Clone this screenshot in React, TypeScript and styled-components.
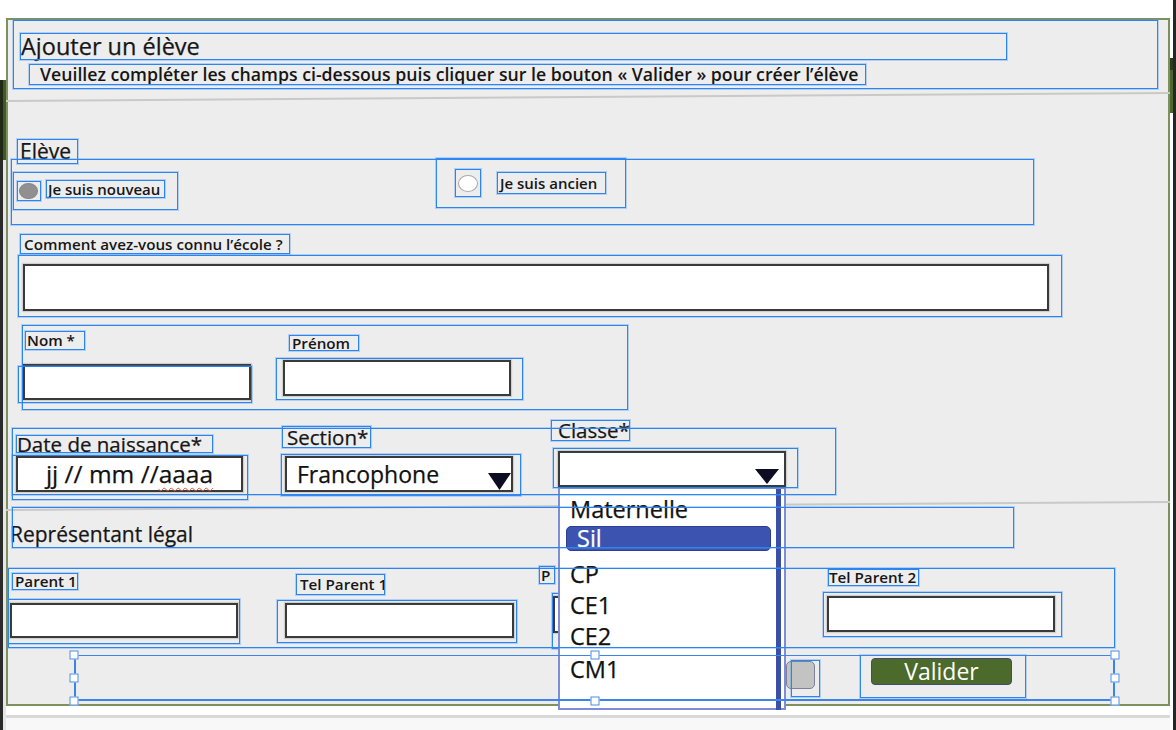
import React from "react";
import styled, { createGlobalStyle, css } from "styled-components";

const GlobalStyle = createGlobalStyle`
  *, *::before, *::after { box-sizing: border-box; }
  html, body { margin: 0; padding: 0; background: #ffffff; }
  body { font-family: "Open Sans", "Noto Sans", "DejaVu Sans", sans-serif; color: #161616; }
  #root { width: 1176px; height: 730px; }
`;

type Place = { $ml?: number; $mt?: number; $w?: number; $h?: number };

const place = css<Place>`
  flex: none;
  margin: 0;
  margin-left: ${(p) => p.$ml ?? 0}px;
  margin-top: ${(p) => p.$mt ?? 0}px;
  ${(p) => (p.$w !== undefined ? `width: ${p.$w}px;` : "")}
  ${(p) => (p.$h !== undefined ? `height: ${p.$h}px;` : "")}
`;

const frame = css`
  position: relative;
  &::after {
    content: "";
    position: absolute;
    inset: 0;
    border: 1px solid #2a85f3;
    outline: 1px solid rgba(70, 150, 245, 0.35);
    z-index: 3;
    pointer-events: none;
  }
`;

const heavier = css`
  -webkit-text-stroke: 0.25px currentColor;
`;

const Screen = styled.div`
  display: flex;
  width: 1176px;
  height: 730px;
  overflow: hidden;
  background: #ffffff;
`;

const LeftRail = styled.div`
  width: 6px;
  flex: none;
  display: flex;
  flex-direction: column;
  padding-top: 80px;
`;

const RailBand = styled.div`
  height: 80px;
  flex: none;
  background: linear-gradient(90deg, #1f2916 0 3px, #3f5a27 3px);
`;

const RailTrack = styled.div`
  flex: 1;
  background: linear-gradient(90deg, #2a2a2a 0 3px, #e6e6e6 3px);
`;

const Center = styled.div`
  width: 1164px;
  flex: none;
  display: flex;
  flex-direction: column;
`;

const TopGap = styled.div`
  height: 18px;
  flex: none;
`;

const Panel = styled.main`
  height: 688px;
  flex: none;
  border: 2px solid #7f905f;
  background: #ededed;
  display: flex;
  flex-direction: column;
  align-items: flex-start;
`;

const Footer = styled.div`
  flex: 1;
  margin-top: 9px;
  border-top: 3px solid #d9d9d9;
  background: #f8f8f8;
`;

const RightRail = styled.div`
  width: 6px;
  flex: none;
  padding-top: 58px;
  background: linear-gradient(90deg, #ffffff 0 3px, #262626 3px);
`;

const RightBand = styled.div`
  width: 3px;
  height: 55px;
  background: linear-gradient(180deg, #2c3b1e 0 12px, #4b6630 12px);
`;

const HeaderFrame = styled.header<Place>`
  ${place}
  ${frame}
  display: flex;
  flex-direction: column;
  align-items: flex-start;
`;

const Title = styled.h1<Place>`
  ${place}
  ${frame}
  ${heavier}
  padding-left: 1px;
  font-size: 23.5px;
  font-weight: 400;
  line-height: 27px;
  white-space: nowrap;
`;

const Subtitle = styled.p<Place>`
  ${place}
  ${frame}
  padding-left: 11px;
  font-size: 17.7px;
  font-weight: 600;
  line-height: 21px;
  white-space: nowrap;
`;

const Separator = styled.hr<{ $mt: number }>`
  flex: none;
  align-self: stretch;
  margin: ${(p) => p.$mt}px -2px 0;
  height: 2px;
  border: 0;
  background: #c9c9c9;
  transform: rotate(-0.4deg);
`;

const SectionTitle = styled.h2<Place>`
  ${place}
  ${frame}
  ${heavier}
  padding-left: 3px;
  font-size: 21px;
  font-weight: 400;
  line-height: 25px;
  white-space: nowrap;
`;

const RadioGroup = styled.div<Place>`
  ${place}
  ${frame}
  display: flex;
  align-items: flex-start;
`;

const RadioOption = styled.label<Place>`
  ${place}
  ${frame}
  display: flex;
  align-items: flex-start;
`;

const RadioMark = styled.span<Place>`
  ${place}
  ${frame}
  display: flex;
  align-items: flex-start;
`;

const RadioDot = styled.span<Place & { $checked?: boolean }>`
  ${place}
  display: block;
  border-radius: 50%;
  ${(p) =>
    p.$checked
      ? css`
          background: #909090;
          border: 1px solid #868686;
        `
      : css`
          background: #ffffff;
          border: 1.5px solid #a8a8a8;
        `}
`;

const OptionText = styled.span<Place & { $pl?: number }>`
  ${place}
  ${frame}
  display: block;
  padding-left: ${(p) => p.$pl ?? 2}px;
  font-size: 15px;
  font-weight: 600;
  line-height: ${(p) => p.$h ?? 20}px;
  white-space: nowrap;
`;

const FieldGroup = styled.div<Place>`
  ${place}
  ${frame}
  display: flex;
  align-items: flex-start;
`;

const Field = styled.div<Place>`
  ${place}
  display: flex;
  flex-direction: column;
  align-items: flex-start;
`;

const FieldLabel = styled.label<Place & { $pl?: number; $big?: boolean; $under?: boolean }>`
  ${place}
  ${frame}
  display: block;
  padding-left: ${(p) => p.$pl ?? 2}px;
  font-size: ${(p) => (p.$big ? 20.5 : 15.2)}px;
  font-weight: ${(p) => (p.$big ? 400 : 600)};
  line-height: ${(p) => p.$h ?? 20}px;
  white-space: nowrap;
  ${(p) => p.$big && heavier}
  ${(p) =>
    p.$under &&
    css`
      &::after {
        z-index: 1;
      }
    `}
`;

const ClippedText = styled.span<{ $w: number }>`
  display: block;
  width: ${(p) => p.$w}px;
  overflow: hidden;
`;

const InputFrame = styled.div<Place & { $under?: boolean }>`
  ${place}
  ${frame}
  display: flex;
  align-items: flex-start;
  ${(p) =>
    p.$under &&
    css`
      &::after {
        z-index: 1;
      }
    `}
`;

const TextInput = styled.input<Place>`
  ${place}
  display: block;
  padding: 0 8px;
  border: 2px solid #3a3a3a;
  background: #ffffff;
  box-shadow: 0 0 1px 1px rgba(0, 0, 0, 0.12);
  font: inherit;
  outline: none;
`;

const DateBox = styled.div<Place>`
  ${place}
  ${heavier}
  border: 2px solid #3a3a3a;
  background: #ffffff;
  box-shadow: 0 0 1px 1px rgba(0, 0, 0, 0.12);
  font-size: 24.5px;
  line-height: 32px;
  text-align: center;
  white-space: nowrap;
  color: #111111;
`;

const Misspelled = styled.span`
  text-decoration: underline wavy #e0553f;
  text-decoration-thickness: 1px;
  text-underline-offset: 4px;
`;

const SelectBox = styled.div<Place>`
  ${place}
  position: relative;
  display: flex;
  align-items: flex-end;
  border: 2px solid #3a3a3a;
  background: #ffffff;
  box-shadow: 0 0 1px 1px rgba(0, 0, 0, 0.12);
`;

const SelectValue = styled.span`
  ${heavier}
  align-self: center;
  padding-left: 10px;
  font-size: 23px;
  line-height: 32px;
  color: #111111;
  white-space: nowrap;
`;

const Arrow = styled.svg<{ $mr: number; $mb: number }>`
  flex: none;
  display: block;
  margin-left: auto;
  margin-right: ${(p) => p.$mr}px;
  margin-bottom: ${(p) => p.$mb}px;
`;

const Dropdown = styled.ul`
  position: absolute;
  top: calc(100% + 2px);
  left: -2px;
  width: 228px;
  height: 223px;
  margin: 0;
  padding: 5px 0 0;
  list-style: none;
  background: #ffffff;
  border: 2px solid #7f8dd6;
  z-index: 2;
`;

const ScrollThumb = styled.span`
  position: absolute;
  top: 0;
  bottom: -2px;
  right: 3px;
  width: 5px;
  background: #3b4fa7;
`;

const OptionItem = styled.li<{ $mt?: number; $active?: boolean }>`
  ${heavier}
  margin-top: ${(p) => p.$mt ?? 0}px;
  height: 31px;
  padding-left: 10px;
  font-size: 23.5px;
  line-height: 31px;
  color: #111111;
  white-space: nowrap;
  ${(p) =>
    p.$active &&
    css`
      margin-left: 6px;
      width: 205px;
      height: 25px;
      line-height: 23px;
      background: #3d53b0;
      border: 1px solid #2d3f91;
      border-radius: 5px;
      color: #ffffff;
    `}
`;

const LegalHeading = styled.h2<Place>`
  ${place}
  ${frame}
  ${heavier}
  padding-top: 13px;
  text-indent: -2px;
  font-size: 21px;
  font-weight: 400;
  line-height: 28px;
  white-space: nowrap;
`;

const ActionBar = styled.div<Place>`
  ${place}
  position: relative;
  display: flex;
  align-items: flex-start;
  &::after {
    content: "";
    position: absolute;
    inset: 0;
    border: solid #3d84ea;
    border-width: 1px 2px 2px 2px;
    z-index: 3;
    pointer-events: none;
  }
`;

const Handle = styled.span<{ $x: number; $y: number }>`
  position: absolute;
  left: ${(p) => p.$x}%;
  top: ${(p) => p.$y}%;
  width: 9px;
  height: 9px;
  transform: translate(-50%, -50%);
  background: #ffffff;
  border: 1px solid #4b8ae6;
  z-index: 4;
`;

const ButtonFrame = styled.div<Place>`
  ${place}
  ${frame}
  display: flex;
  align-items: flex-start;
`;

const GhostButton = styled.button<Place>`
  ${place}
  padding: 0;
  border: 1.5px solid #7d8096;
  border-radius: 5px;
  background: #c3c3c3;
`;

const SubmitButton = styled.button<Place>`
  ${place}
  padding: 0;
  border: 1px solid #3e4e6e;
  border-radius: 4px;
  background: #4b6a2c;
  color: #ffffff;
  font-family: inherit;
  font-size: 23px;
  line-height: 25px;
  text-align: center;
`;

const handles: Array<[number, number]> = [
  [0, 0],
  [50, 0],
  [100, 0],
  [0, 50],
  [100, 50],
  [0, 100],
  [50, 100],
  [100, 100],
];

const classes = ["Maternelle", "Sil", "CP", "CE1", "CE2", "CM1"];
const optionOffsets: Record<string, number> = { Sil: 1, CP: 8, CM1: 2 };

export default function App() {
  return (
    <>
      <GlobalStyle />
      <Screen>
        <LeftRail>
          <RailBand />
          <RailTrack />
        </LeftRail>
        <Center>
          <TopGap />
          <Panel>
            <HeaderFrame $ml={5} $mt={0} $w={1145} $h={69}>
              <Title $ml={7} $mt={13} $w={987} $h={27}>
                Ajouter un élève
              </Title>
              <Subtitle $ml={16} $mt={4} $w={837} $h={21}>
                Veuillez compléter les champs ci-dessous puis cliquer sur le bouton « Valider » pour créer l’élève
              </Subtitle>
            </HeaderFrame>
            <Separator $mt={7} />
            <SectionTitle $ml={9} $mt={41} $w={61} $h={25}>
              Elève
            </SectionTitle>
            <RadioGroup $ml={3} $mt={-5} $w={1023} $h={66}>
              <RadioOption $ml={2} $mt={13} $w={165} $h={38}>
                <RadioMark $ml={4} $mt={9} $w={24} $h={20}>
                  <RadioDot $checked $ml={2} $mt={2} $w={19} $h={16} />
                </RadioMark>
                <OptionText $ml={5} $mt={8} $w={119} $h={18} $pl={2}>
                  Je suis nouveau
                </OptionText>
              </RadioOption>
              <RadioOption $ml={258} $mt={-1} $w={190} $h={50}>
                <RadioMark $ml={19} $mt={11} $w={26} $h={28}>
                  <RadioDot $ml={3} $mt={6} $w={20} $h={17} />
                </RadioMark>
                <OptionText $ml={16} $mt={14} $w={109} $h={22} $pl={3}>
                  Je suis ancien
                </OptionText>
              </RadioOption>
            </RadioGroup>
            <FieldLabel $ml={12} $mt={9} $w={270} $h={20} $pl={4}>
              Comment avez-vous connu l’école ?
            </FieldLabel>
            <InputFrame $ml={10} $mt={1} $w={1044} $h={62}>
              <TextInput $ml={5} $mt={9} $w={1026} $h={47} />
            </InputFrame>
            <FieldGroup $ml={14} $mt={8} $w={606} $h={85}>
              <Field $ml={-4}>
                <FieldLabel $ml={7} $mt={6} $w={60} $h={19} $pl={2}>
                  Nom *
                </FieldLabel>
                <InputFrame $mt={16} $w={234} $h={37}>
                  <TextInput $ml={5} $mt={-2} $w={228} $h={36} />
                </InputFrame>
              </Field>
              <Field $ml={24}>
                <FieldLabel $ml={13} $mt={10} $w={70} $h={16} $pl={3}>
                  Prénom
                </FieldLabel>
                <InputFrame $mt={7} $w={247} $h={42}>
                  <TextInput $ml={7} $mt={2} $w={228} $h={36} />
                </InputFrame>
              </Field>
            </FieldGroup>
            <FieldGroup $ml={4} $mt={18} $w={824} $h={67}>
              <Field>
                <FieldLabel $big $ml={4} $mt={7} $w={197} $h={18} $pl={1}>
                  Date de naissance*
                </FieldLabel>
                <InputFrame $mt={2} $w={236} $h={45}>
                  <DateBox $ml={4} $mt={1} $w={227} $h={36}>
                    jj // mm //<Misspelled>aaaa</Misspelled>
                  </DateBox>
                </InputFrame>
              </Field>
              <Field $ml={33} $mt={-2}>
                <FieldLabel $big $ml={1} $w={89} $h={22} $pl={5}>
                  Section*
                </FieldLabel>
                <InputFrame $mt={6} $w={240} $h={42}>
                  <SelectBox $ml={4} $mt={2} $w={228} $h={36}>
                    <SelectValue>Francophone</SelectValue>
                    <Arrow $mr={0} $mb={0} width={23} height={17} viewBox="0 0 23 17">
                      <polygon points="0,0 23,0 11.5,17" fill="#0c0c22" />
                    </Arrow>
                  </SelectBox>
                </InputFrame>
              </Field>
              <Field $ml={30} $mt={-8}>
                <FieldLabel $big $w={79} $h={21} $pl={7}>
                  Classe*
                </FieldLabel>
                <InputFrame $ml={2} $mt={7} $w={245} $h={40}>
                  <SelectBox $ml={5} $mt={3} $w={228} $h={36}>
                    <SelectValue />
                    <Arrow $mr={5} $mb={1} width={24} height={15} viewBox="0 0 24 15">
                      <polygon points="0,0 24,0 12,15" fill="#0c0c22" />
                    </Arrow>
                    <Dropdown>
                      {classes.map((c) => (
                        <OptionItem key={c} $mt={optionOffsets[c]} $active={c === "Sil"}>
                          {c}
                        </OptionItem>
                      ))}
                      <ScrollThumb />
                    </Dropdown>
                  </SelectBox>
                </InputFrame>
              </Field>
            </FieldGroup>
            <Separator $mt={10} />
            <LegalHeading $ml={4} $w={1002} $h={41}>
              Représentant légal
            </LegalHeading>
            <FieldGroup $ml={0} $mt={20} $w={1107} $h={80}>
              <Field $w={232}>
                <FieldLabel $ml={4} $mt={5} $w={66} $h={17} $pl={3}>
                  Parent 1
                </FieldLabel>
                <InputFrame $mt={9} $w={232} $h={45}>
                  <TextInput $ml={2} $mt={4} $w={228} $h={35} />
                </InputFrame>
              </Field>
              <Field $ml={37} $w={240}>
                <FieldLabel $ml={19} $mt={6} $w={89} $h={21} $pl={4}>
                  Tel Parent 1
                </FieldLabel>
                <InputFrame $mt={5} $w={240} $h={43}>
                  <TextInput $ml={8} $mt={3} $w={229} $h={35} />
                </InputFrame>
              </Field>
              <Field $ml={22} $mt={-2} $w={253}>
                <FieldLabel $under $w={16} $h={18} $pl={2}>
                  <ClippedText $w={10}>Parent 2</ClippedText>
                </FieldLabel>
                <InputFrame $under $ml={13} $mt={9} $w={200} $h={56}>
                  <TextInput $ml={1} $mt={3} $w={198} $h={37} />
                </InputFrame>
              </Field>
              <Field $ml={31} $mt={1} $w={239}>
                <FieldLabel $ml={5} $w={91} $h={17} $pl={1}>
                  Tel Parent 2
                </FieldLabel>
                <InputFrame $mt={6} $w={239} $h={45}>
                  <TextInput $ml={4} $mt={4} $w={228} $h={36} />
                </InputFrame>
              </Field>
            </FieldGroup>
            <ActionBar $ml={66} $mt={7} $w={1041} $h={46}>
              <ButtonFrame $ml={717} $mt={5} $w={29} $h={37}>
                <GhostButton $ml={-5} $mt={1} $w={29} $h={28} aria-label="Annuler" />
              </ButtonFrame>
              <ButtonFrame $ml={40} $w={166} $h={43}>
                <SubmitButton $ml={11} $mt={3} $w={141} $h={27}>
                  Valider
                </SubmitButton>
              </ButtonFrame>
              {handles.map(([x, y]) => (
                <Handle key={`${x}-${y}`} $x={x} $y={y} />
              ))}
            </ActionBar>
          </Panel>
          <Footer />
        </Center>
        <RightRail>
          <RightBand />
        </RightRail>
      </Screen>
    </>
  );
}
